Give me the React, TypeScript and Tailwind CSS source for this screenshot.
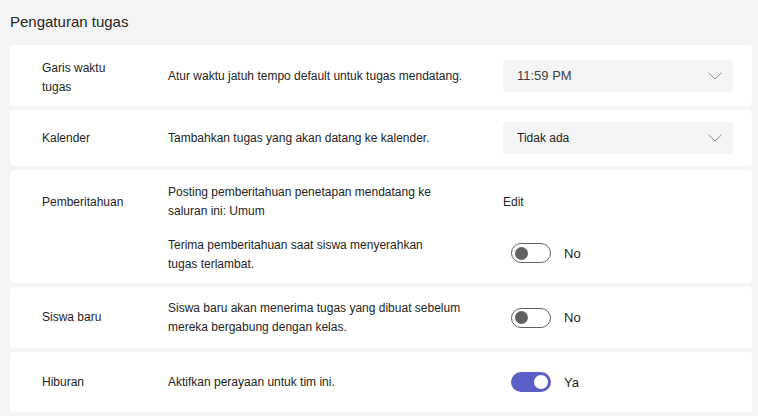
import type { ReactNode } from "react";

/** ドロップダウン（見た目のみ） */
function Dropdown({ value, muted }: { value: string; muted?: boolean }) {
  return (
    <div className="flex h-[32px] w-[230px] items-center justify-between rounded-[4px] bg-[#f5f5f5] pl-[14px] pr-[11px]">
      <span className={muted ? "text-[13px] text-[#424242]" : "text-[12px] text-[#242424]"}>
        {value}
      </span>
      <svg width="14" height="8" viewBox="0 0 14 8" fill="none">
        <path d="M0.5 0.8 L7 7 L13.5 0.8" stroke="#8a8a8a" strokeWidth="1" />
      </svg>
    </div>
  );
}

/** トグルスイッチ */
function Toggle({ on, label }: { on: boolean; label: string }) {
  return (
    <div className="flex items-center pl-[8px]">
      {on ? (
        <span className="flex h-[20px] w-[40px] items-center justify-end rounded-full bg-[#5b5fc7] pr-[3px]">
          <span className="h-[14px] w-[14px] rounded-full bg-white" />
        </span>
      ) : (
        <span className="flex h-[20px] w-[40px] items-center rounded-full border border-[#616161] bg-white pl-[3px]">
          <span className="h-[13px] w-[13px] rounded-full bg-[#616161]" />
        </span>
      )}
      <span className="ml-[13px] text-[13px] text-[#242424]">{label}</span>
    </div>
  );
}

function Row({
  label,
  desc,
  control,
  height,
}: {
  label: ReactNode;
  desc: ReactNode;
  control: ReactNode;
  height: string;
}) {
  return (
    <section
      className={`grid grid-cols-[126px_335px_230px] items-center rounded-[4px] bg-white pl-[32px] ${height}`}
    >
      <div>{label}</div>
      <div>{desc}</div>
      <div>{control}</div>
    </section>
  );
}

export default function App() {
  return (
    <div
      className="h-[416px] w-[758px] overflow-hidden bg-[#f5f5f5] pl-[10px] pr-[6px] text-[12px] leading-[19px] text-[#242424]"
      style={{ fontFamily: '"Liberation Sans", Arial, sans-serif' }}
    >
      <h1 className="pt-[12px] pb-[13px] text-[15px] leading-[20px] font-normal text-[#242424]">
        Pengaturan tugas
      </h1>

      <div className="flex flex-col gap-[4px]">
        <Row
          height="h-[61px]"
          label={
            <div className="pt-[4px]">
              Garis waktu
              <br />
              tugas
            </div>
          }
          desc={<div className="pt-[2px]">Atur waktu jatuh tempo default untuk tugas mendatang.</div>}
          control={<Dropdown value="11:59 PM" muted />}
        />

        <Row
          height="h-[56px]"
          label="Kalender"
          desc="Tambahkan tugas yang akan datang ke kalender."
          control={<Dropdown value="Tidak ada" />}
        />

        {/* 通知：2段構成 */}
        <section className="grid h-[113px] grid-cols-[126px_565px] rounded-[4px] bg-white pl-[32px] pt-[13px]">
          <div className="pt-[10px]">Pemberitahuan</div>
          <div className="flex flex-col gap-[15px]">
            <div className="grid grid-cols-[335px_230px] items-center">
              <div>
                Posting pemberitahuan penetapan mendatang ke
                <br />
                saluran ini: Umum
              </div>
              <div>Edit</div>
            </div>
            <div className="grid grid-cols-[335px_230px] items-center">
              <div>
                Terima pemberitahuan saat siswa menyerahkan
                <br />
                tugas terlambat.
              </div>
              <div className="-mt-[4px]">
                <Toggle on={false} label="No" />
              </div>
            </div>
          </div>
        </section>

        <Row
          height="h-[61px]"
          label="Siswa baru"
          desc={
            <>
              Siswa baru akan menerima tugas yang dibuat sebelum
              <br />
              mereka bergabung dengan kelas.
            </>
          }
          control={<Toggle on={false} label="No" />}
        />

        <Row
          height="h-[60px]"
          label="Hiburan"
          desc="Aktifkan perayaan untuk tim ini."
          control={<Toggle on label="Ya" />}
        />
      </div>
    </div>
  );
}
